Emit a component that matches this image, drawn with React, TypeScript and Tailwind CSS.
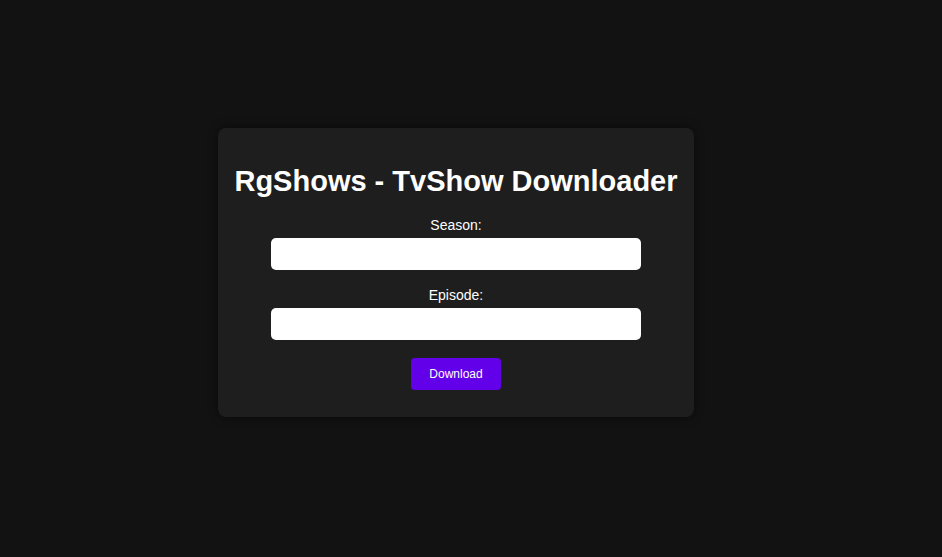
export default function App() {
  return (
    <div
      className="min-h-screen bg-[#121212] pt-[128px] pl-[218px]"
      style={{ fontFamily: '"Liberation Sans", Arial, sans-serif' }}
    >
      <div className="flex w-[476px] flex-col items-center rounded-lg bg-[#1e1e1e] px-4 pt-5 pb-[27px] text-white shadow-[0_0_10px_rgba(0,0,0,0.5)]">
        <h1 className="mt-[17px] mb-[19px] text-[29px] font-bold leading-[33px] whitespace-nowrap">
          RgShows - TvShow Downloader
        </h1>
        <label className="mb-[5px] block text-[14px] leading-[16px]">Season:</label>
        <input className="mb-[17px] h-8 w-[370px] rounded-[5px] bg-white px-2 text-black outline-none" type="text" />
        <label className="mb-[5px] block text-[14px] leading-[16px]">Episode:</label>
        <input className="h-8 w-[370px] rounded-[5px] bg-white px-2 text-black outline-none" type="text" />
        <button className="mt-[18px] h-8 w-[90px] rounded-[4px] bg-[#6200ea] text-[12px] text-white">
          Download
        </button>
      </div>
    </div>
  )
}
